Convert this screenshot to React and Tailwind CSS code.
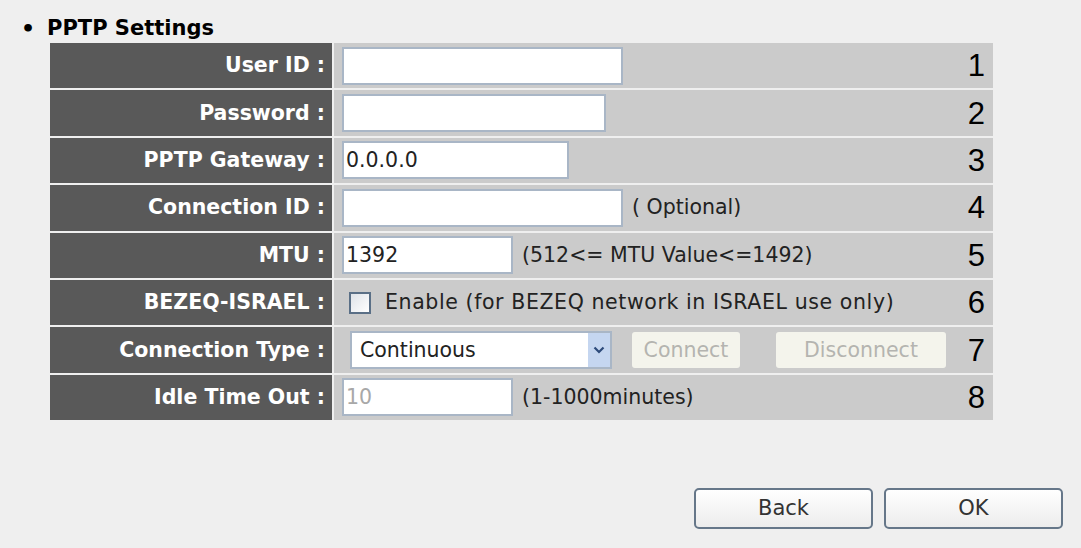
import React, { useState } from 'react';

const labelFont = { fontFamily: '"DejaVu Sans", Tahoma, sans-serif' };

const TextBox = ({ value = '', width, disabled = false }) => (
  <input
    type="text"
    defaultValue={value}
    disabled={disabled}
    className={`h-[38px] border-2 border-[#a9b6c6] bg-white px-[2px] text-[20.5px] text-[#222] outline-none ${
      disabled ? 'text-[#a8a8a8]' : ''
    }`}
    style={{ width, ...labelFont }}
  />
);

const Row = ({ label, num, children }) => (
  <div className="flex h-[45.4px] gap-[2px]">
    <div
      className="flex w-[282px] shrink-0 items-center justify-end bg-[#595959] pr-[7px] text-[20.5px] font-bold text-white"
      style={labelFont}
    >
      {label}
    </div>
    <div className="flex flex-1 items-center bg-[#cbcbcb] pl-[8px] pr-[8px]">
      <div className="flex flex-1 items-center text-[20.5px] text-[#222]" style={labelFont}>
        {children}
      </div>
      <div className="text-[31px] leading-none text-black" style={{ fontFamily: '"Liberation Sans", Arial, sans-serif' }}>
        {num}
      </div>
    </div>
  </div>
);

const DisabledButton = ({ children, width }) => (
  <button
    disabled
    className="h-[36px] rounded-[3px] bg-[#f4f4ec] text-[20.5px] text-[#b4b4b0]"
    style={{ width, ...labelFont }}
  >
    {children}
  </button>
);

const DialogButton = ({ children }) => (
  <button
    className="h-[41px] w-[179px] rounded-[5px] border-2 border-[#667789] bg-gradient-to-b from-white to-[#ececec] text-[21px] text-[#333]"
    style={labelFont}
  >
    {children}
  </button>
);

export default function App() {
  const [enabled, setEnabled] = useState(false);

  return (
    <div className="h-[548px] w-[1081px] overflow-hidden bg-[#efefef]">
      <div className="pl-[21px] pt-[16px]">
        <div className="flex items-center gap-[12px] text-[21px] font-bold leading-[25px] text-black" style={labelFont}>
          <span className="text-[22px]">•</span>
          <span>PPTP Settings</span>
        </div>
      </div>

      <div className="ml-[50px] mt-[2px] flex w-[943px] flex-col gap-[2px]">
        <Row label="User ID :" num="1">
          <TextBox width={281} />
        </Row>
        <Row label="Password :" num="2">
          <TextBox width={264} />
        </Row>
        <Row label="PPTP Gateway :" num="3">
          <TextBox value="0.0.0.0" width={227} />
        </Row>
        <Row label="Connection ID :" num="4">
          <TextBox width={281} />
          <span className="ml-[9px]">( Optional)</span>
        </Row>
        <Row label="MTU :" num="5">
          <TextBox value="1392" width={171} />
          <span className="ml-[9px]">(512&lt;= MTU Value&lt;=1492)</span>
        </Row>
        <Row label="BEZEQ-ISRAEL :" num="6">
          <label className="ml-[7px] flex items-center">
            <input
              type="checkbox"
              checked={enabled}
              onChange={e => setEnabled(e.target.checked)}
              className="h-[22px] w-[22px] appearance-none border-2 border-[#5a6f86] bg-gradient-to-br from-[#dfe3e8] to-white"
            />
            <span className="ml-[14px] tracking-[0.6px]">Enable (for BEZEQ network in ISRAEL use only)</span>
          </label>
        </Row>
        <Row label="Connection Type :" num="7">
          <div className="ml-[8px] flex h-[38px] w-[262px] items-center justify-between border-2 border-[#a9b6c6] bg-white pl-[8px]">
            <span>Continuous</span>
            <span className="flex h-full w-[22px] items-center justify-center bg-[#c5d6f0]">
              <svg width="12" height="8" viewBox="0 0 12 8">
                <path d="M1.5 1.5 L6 6 L10.5 1.5" fill="none" stroke="#2d4a7a" strokeWidth="2.2" />
              </svg>
            </span>
          </div>
          <div className="ml-[20px] flex gap-[36px]">
            <DisabledButton width={108}>Connect</DisabledButton>
            <DisabledButton width={170}>Disconnect</DisabledButton>
          </div>
        </Row>
        <Row label="Idle Time Out :" num="8">
          <TextBox value="10" width={171} disabled />
          <span className="ml-[9px]">(1-1000minutes)</span>
        </Row>
      </div>

      <div className="mt-[68px] flex justify-end gap-[11px] pr-[18px]">
        <DialogButton>Back</DialogButton>
        <DialogButton>OK</DialogButton>
      </div>
    </div>
  );
}
